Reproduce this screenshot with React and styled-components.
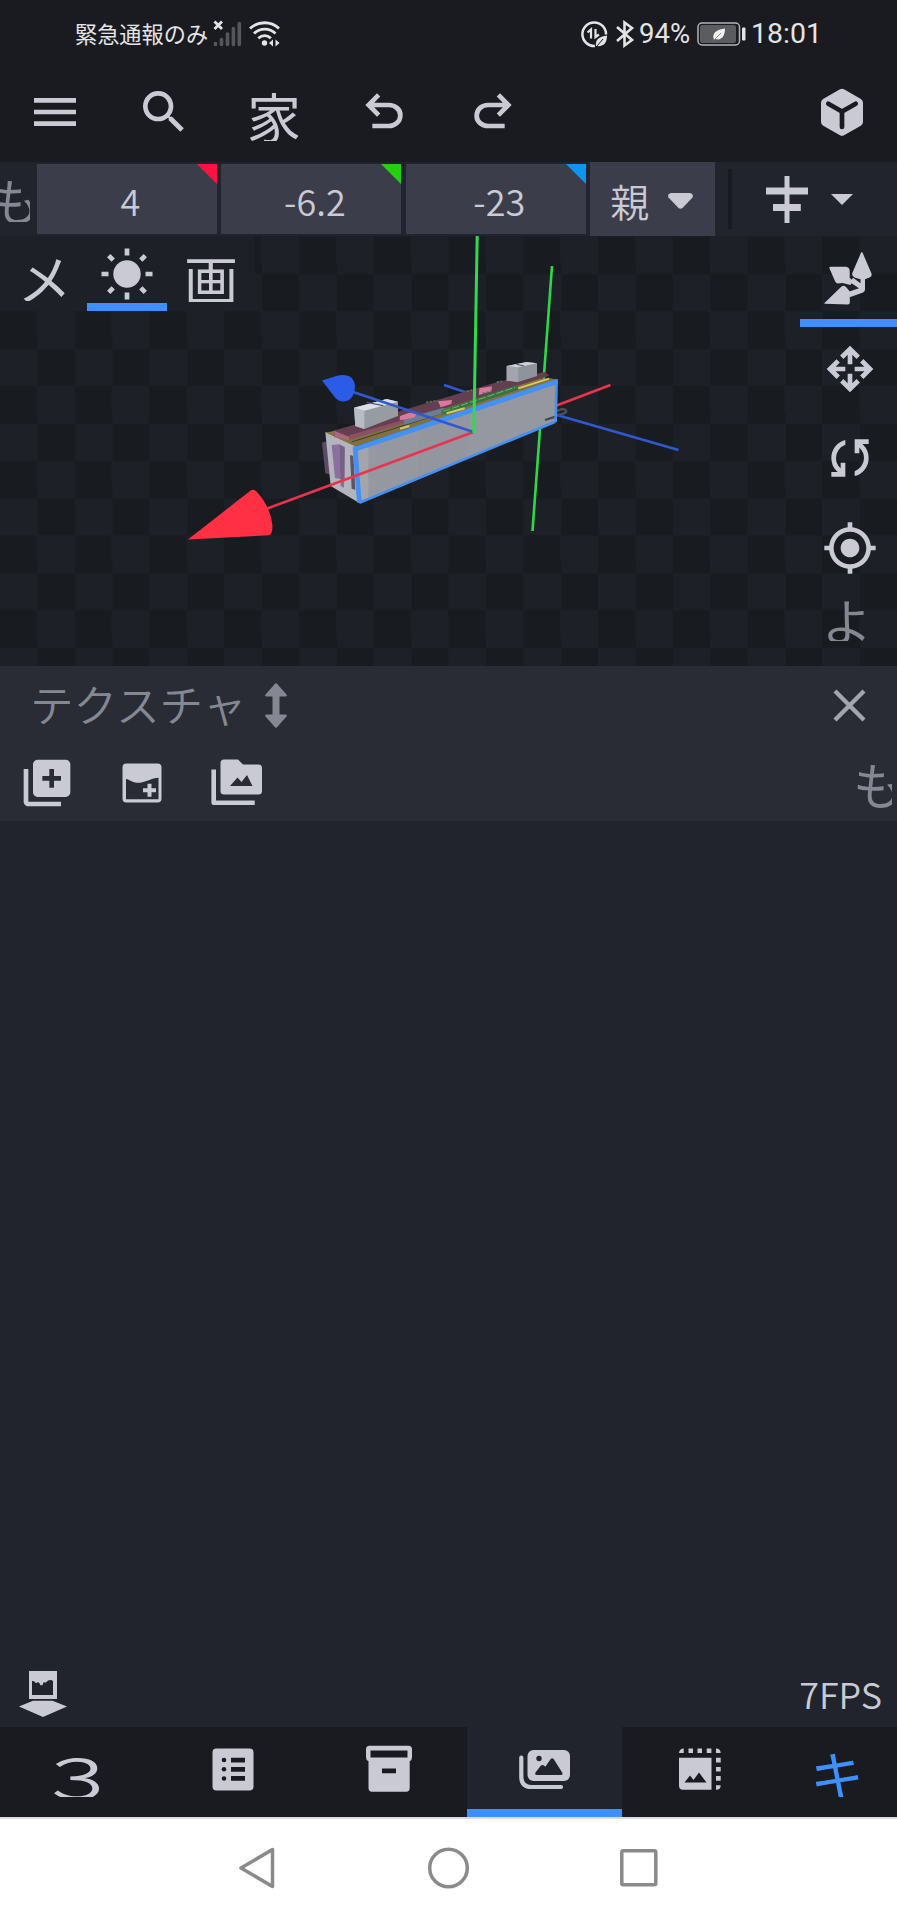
import styled, { createGlobalStyle } from "styled-components";
import { MdSearch, MdMenu, MdGpsFixed } from "react-icons/md";

const GlobalStyle = createGlobalStyle`
  * {
    box-sizing: border-box;
  }

  body {
    margin: 0;
    background: #21242c;
  }
`;

const Screen = styled.div`
  width: 897px;
  height: 1920px;
  display: flex;
  flex-direction: column;
  overflow: hidden;
  background: #21242c;
  color: #cacad4;
  font-family: "Noto Sans CJK JP", sans-serif;

  svg {
    display: block;
    flex: none;
  }
`;

const StatusBar = styled.div`
  height: 68px;
  padding: 0 75px 0 75px;
  display: flex;
  align-items: center;
  background: #1a1b20;
  color: #e4e4e6;
`;

const Carrier = styled.span`
  width: 138px;
  font-size: 22.2px;
  line-height: 30px;
  padding-bottom: 2px;
  white-space: nowrap;
`;

const StatusText = styled.span`
  width: ${(p) => p.$width}px;
  font-family: Roboto, sans-serif;
  font-size: ${(p) => p.$size}px;
  line-height: 30px;
  text-align: ${(p) => p.$align || "left"};
  white-space: nowrap;
`;

const SignalGroup = styled.div`
  display: flex;
  gap: 7px;
`;

const StatusGroup = styled.div`
  margin-left: auto;
  display: flex;
  align-items: center;
`;

const Header = styled.div`
  height: 94px;
  padding-bottom: 6px;
  display: flex;
  align-items: center;
  background: #1a1b20;
`;

const HeaderButton = styled.div`
  width: 109.6px;
  display: flex;
  justify-content: center;
  margin-left: ${(p) => (p.$end ? "auto" : "0")};
`;

const Glyph = styled.span`
  display: block;
  flex: none;
  overflow: hidden;
  width: ${(p) => p.$w}px;
  height: ${(p) => p.$h}px;
  margin: ${(p) => p.$margin || "0"};
  font-size: ${(p) => p.$size}px;
  font-weight: ${(p) => p.$weight || 400};
  line-height: ${(p) => p.$line || p.$h}px;
  text-indent: ${(p) => p.$indent || 0}px;
  white-space: nowrap;
  color: ${(p) => p.$color || "#cacad4"};
  transform: scaleX(${(p) => p.$stretch || 1});
`;

const ValueBar = styled.div`
  height: 74px;
  display: flex;
  align-items: center;
`;

const Value = styled.div`
  position: relative;
  width: 180px;
  height: 70px;
  margin-right: 4.4px;
  padding-left: 7px;
  background: #3b3e4a;
  font-size: 36px;
  font-weight: 350;
  line-height: 73px;
  text-align: center;

  &::after {
    content: "";
    position: absolute;
    top: 0;
    right: 0;
    border-top: 20px solid ${(p) => p.$axis};
    border-left: 20px solid transparent;
  }
`;

const Select = styled.div`
  width: 125px;
  height: 74px;
  padding: 4px 22px 0 20px;
  display: flex;
  align-items: center;
  justify-content: space-between;
  background: #3b3e4a;
`;

const Divider = styled.div`
  width: 4px;
  height: 60px;
  margin: 0 34px 0 13px;
  background: #1a1b20;
`;

const Viewport = styled.div`
  position: relative;
  height: 430px;
  display: flex;
  justify-content: space-between;
  background: repeating-conic-gradient(#1d2027 0 25%, #181b1f 0 50%) 0 0.5px / 74.75px 74.75px;
`;

const Scene = styled.svg`
  position: absolute;
  left: 0;
  top: 0;
`;

const ViewModes = styled.div`
  position: relative;
  height: 75px;
  width: 255px;
  display: flex;
  background: #1d2027;
`;

const Mode = styled.div`
  width: ${(p) => p.$width}px;
  height: 75px;
  display: flex;
  justify-content: center;
  padding-top: ${(p) => p.$top}px;
  border-bottom: 8px solid ${(p) => (p.$active ? "#3e90ff" : "transparent")};
`;

const Tools = styled.div`
  position: relative;
  width: 97px;
  display: flex;
  flex-direction: column;
`;

const Tool = styled.div`
  height: 89.5px;
  padding: 0 0 6px 22px;
  display: flex;
  align-items: center;
`;

const ActiveTool = styled.div`
  height: 91px;
  padding: 16px 0 0 24px;
  border-bottom: 8px solid #3e90ff;
`;

const PanelHeader = styled.div`
  height: 80px;
  padding: 0 31px 2px 30px;
  display: flex;
  align-items: center;
  background: #292c35;
`;

const PanelTitle = styled.span`
  width: 235px;
  padding-bottom: 4px;
  color: #858892;
  font-size: 43.6px;
  font-weight: 350;
  line-height: 72px;
  white-space: nowrap;
`;

const CloseButton = styled.div`
  margin-left: auto;
`;

const PanelTools = styled.div`
  height: 75px;
  padding: 0 5px 0 19px;
  display: flex;
  align-items: center;
  background: #292c35;
`;

const PanelTool = styled.div`
  width: ${(p) => p.$width}px;
  height: 75px;
  padding-top: 9px;
`;

const TextureList = styled.div`
  flex: 1;
  display: flex;
  align-items: flex-end;
  justify-content: space-between;
  padding: 0 15px 8px 18px;
`;

const Fps = styled.span`
  padding-bottom: 4px;
  font-size: 36px;
  font-weight: 350;
  line-height: 44px;
`;

const ModeBar = styled.div`
  height: 90px;
  display: flex;
  background: #1a1b20;
`;

const Tab = styled.div`
  width: ${(p) => p.$width || 155.5}px;
  display: flex;
  justify-content: center;
  padding-top: ${(p) => p.$top || 14}px;
  background: ${(p) => (p.$active ? "#21242c" : "transparent")};
  border-bottom: 8px solid ${(p) => (p.$active ? "#3e90ff" : "transparent")};
`;

const NavBar = styled.div`
  height: 103px;
  padding: 0 0 3px 237px;
  display: flex;
  align-items: center;
  gap: 149px;
  background: #fff;
  border-top: 2px solid #dcdcde;
`;

// 24 unit grid, 56px on screen
const Icon = ({ children, size = 56 }) => (
  <svg width={size} height={size} viewBox="0 0 24 24" fill="currentColor">
    {children}
  </svg>
);

const SymbolIcon = ({ d }) => (
  <svg width="56" height="56" viewBox="0 -960 960 960" fill="currentColor">
    <path d={d} />
  </svg>
);

const UNDO =
  "M280-200v-80h284q63 0 109.5-40T720-420q0-60-46.5-100T564-560H312l104 104-56 56-200-200 200-200 56 56-104 104h252q97 0 169.5 63T800-420q0 94-72.5 157T564-200H280Z";
const REDO =
  "M396-200q-97 0-169.5-63T160-420q0-94 69-157T396-640h252L544-744l56-56 200 200-200 200-56-56 104-104H396q-63 0-109.5 40T240-420q0 60 46.5 100T396-280h284v80H396Z";
const MOVE =
  "M480-80 310-250l57-57 73 73v-166h80v165l72-73 58 58L480-80ZM250-310 80-480l169-169 57 57-72 72h166v80H235l73 72-58 58Zm460 0-57-57 73-73H560v-80h165l-73-72 58-58 170 170-170 170ZM440-560v-166l-73 73-57-57 170-170 170 170-57 57-73-73v166h-80Z";
const ROTATE =
  "M160-160v-80h110l-16-14q-52-46-73-105t-21-119q0-111 66.5-197.5T400-790v84q-72 26-116 88.5T240-478q0 45 17 87.5t53 78.5l10 10v-98h80v240H160Zm400-10v-84q72-26 116-88.5T720-482q0-45-17-87.5T650-648l-10-10v98h-80v-240h240v80H690l16 14q49 49 71.5 106.5T800-482q0 111-66.5 197.5T560-170Z";

const Signal = () => (
  <svg width="29" height="28" viewBox="0 0 29 28">
    <path d="M1.5 1.5l7.500 7.500M9 1.5l-7.500 7.500" stroke="#e4e4e6" strokeWidth="2.8" />
    <path
      d="M2.500 24.500v-1M8.500 19.500v5M14.500 14v10.500M20.400 8.500v16M26.300 3.500v21"
      stroke="#55565b"
      strokeWidth="3.600"
      strokeLinecap="round"
    />
  </svg>
);

const Wifi = () => (
  <svg width="32" height="28" viewBox="0 0 32 28" fill="none" stroke="#e4e4e6" strokeWidth="2.8">
    <path d="M1 8.5C9 .8 22 .8 30 8.5M5 13.500c6-5.800 15.500-5.800 21.500 0M9.300 18.200c4-3.400 8.800-3.400 12.600 0" />
    <circle cx="15.500" cy="23" r="2.700" fill="#e4e4e6" stroke="none" />
    <path d="M24 19.500v7l-4-3.500zM26.500 19.500v7l4-3.500z" fill="#e4e4e6" stroke="none" />
  </svg>
);

const DataSaver = () => (
  <svg width="28" height="28" viewBox="0 0 28 28" fill="none" stroke="#e4e4e6" strokeWidth="2.500">
    <path d="M26 14.500A11.800 11.800 0 1 0 15 26" />
    <path d="M7.500 12.500l3.500-3v9M15.500 9v8l3.500-2.500" strokeWidth="2.200" />
    <path d="M16 26c-1-7 4-9.500 11-10.500 0 7-3 11.500-11 10.500z" fill="#e4e4e6" stroke="none" />
    <path d="M17 26l6-7" stroke="#1a1b20" strokeWidth="1" />
  </svg>
);

const Bluetooth = () => (
  <svg width="31" height="28" viewBox="0 0 31 28" fill="none" stroke="#e4e4e6" strokeWidth="2.600">
    <path d="M9 7l15 13-7.500 5.500V2.500L24 8 9 21" />
  </svg>
);

const Battery = () => (
  <svg width="50" height="26" viewBox="0 0 50 26">
    <rect x="1" y="2" width="41.500" height="22" rx="4" fill="none" stroke="#b4b4b6" strokeWidth="1.500" />
    <rect x="3" y="4" width="36" height="18" rx="2" fill="#5b5c5f" />
    <rect x="45" y="6.500" width="3.500" height="13" rx="1" fill="#e4e4e6" />
    <path d="M17 19c-3-8 4-10.500 11-11.500 0 7-3 12.500-10 10.500l-2 2.500z" fill="#f1f1f1" />
    <path d="M17 19l7-7" stroke="#88898b" strokeWidth="1" />
  </svg>
);

const Cube = () => (
  <svg width="42" height="48" viewBox="0 0 42 48">
    <path
      d="M19 1.200q2-1.100 4 0L39.500 10.700q2.500 1.500 2.500 4V34q0 2.400-2.200 3.700L23 47.300q-2 1.100-4 0L2.200 37.700Q0 36.400 0 34V14.700q0-2.500 2.500-4z"
      fill="#cacad4"
    />
    <path d="M7.300 15.700L21 23.500l13.700-7.800M21 23.500V39" fill="none" stroke="#1a1b20" strokeWidth="4.700" strokeLinecap="round" />
  </svg>
);

const PivotIcon = () => (
  <svg width="50" height="56" viewBox="0 0 50 56" fill="#cacad4">
    <path d="M5.500 16.500q-.8-1.800 1-1.800L22 14.700q3.500.5 3.700 4v7L29 29l-2.500 4-8-2-5 .5q-1.500-.3-2.300-2z" />
    <path d="M37 .8q.8-1.600 1.600 0L47.500 21.500q.7 3-2 4l-4.500 1.800v10.200q0 2-2 3l-13.300 4.800-1-5.500L35 36.300l-9-6 3-4.500 7.500 5.500v-4l-5.500-1.600q-3.500-1.500-2.700-4.700z" />
    <path d="M1 50.500L17 35q3-2.500 5.500.5l3.300 4v11q0 2-2 2L1 51.700q-1.500-.2 0-1.200z" />
  </svg>
);

const Sun = () => (
  <svg width="52" height="52" viewBox="-26 -26 52 52">
    <circle r="13.700" fill="#cacad4" />
    <g stroke="#cacad4" strokeWidth="4.700">
      <path d="M0-25.500v7M0 25.500v-7M-25.500 0h7M25.500 0h-7" />
      <path d="M-18.300-18.300l4.500 4.500M18.300-18.300l-4.500 4.500M-18.300 18.300l4.500-4.500M18.300 18.300l-4.500-4.500" />
    </g>
  </svg>
);

const AlignIcon = () => (
  <svg width="42" height="47" viewBox="0 0 42 47" fill="#cacad4">
    <path d="M18.500 0h5v11.500H42v7H23.500V28h11.300v7H23.500v12h-5V35H7v-7h11.500v-9.500H0v-7h18.500z" />
  </svg>
);

const NewTexture = () => (
  <svg width="56" height="56" viewBox="0 0 56 56">
    <rect x="8.500" y="8.500" width="39" height="39" rx="4" fill="#cacad4" />
    <path d="M12 24c4 .5 6 4 13 3.800 7-.3 13-5 19.500-5v21.500H12z" fill="#292c35" />
    <path d="M29 35.200h13M35.500 28.800v13" stroke="#cacad4" strokeWidth="4" />
  </svg>
);

const LoadFolder = () => (
  <svg width="56" height="56" viewBox="0 0 56 56">
    <path d="M4.700 14.500v33.200h41" fill="none" stroke="#cacad4" strokeWidth="4.600" strokeLinejoin="round" />
    <path d="M11.500 8q0-3.500 3.500-3.500h14l5 5h15.500q3.500 0 3.500 3.500v23q0 3.500-3.500 3.500H15q-3.500 0-3.500-3.500z" fill="#cacad4" />
    <path d="M21 31l7.500-8.500 4 4.500 5.500-7L43.500 31z" fill="#292c35" />
  </svg>
);

const ResizeArrow = () => (
  <svg width="22" height="45" viewBox="0 0 22 45" fill="#858892">
    <path d="M10 .8q1-1 2 0l9.500 10.700q1 2-1 2H14.500v18h6q2 0 1 2L12 44.200q-1 1-2 0L.5 33.500q-1-2 1-2h6v-18h-6q-2 0-1-2z" />
  </svg>
);

const PaintOnto = () => (
  <svg width="50" height="48" viewBox="0 0 50 48" fill="#cacad4">
    <path d="M11 0h28v28H11z" />
    <path d="M14 10l2 .2 2 2 2-1.200 1.500 1.200 1 2h2l1-3 2.500.2 2-1.800q3-1.200 5 .4v14H14z" fill="#21242c" />
    <path d="M1 35.500l14-5.700h19.500L49 35.500 25 46z" />
  </svg>
);

const ListIcon = () => (
  <svg width="56" height="56" viewBox="0 0 56 56">
    <rect x="7.500" y="7.500" width="41" height="42" rx="4" fill="#cacad4" />
    <g fill="#1a1b20">
      <circle cx="19" cy="19" r="2.300" />
      <circle cx="19" cy="28.300" r="2.300" />
      <circle cx="19" cy="37.500" r="2.300" />
      <path d="M26 16.700h14v4.700H26zM26 26h14v4.700H26zM26 35h14v4.700H26z" />
    </g>
  </svg>
);

const ArchiveIcon = () => (
  <svg width="56" height="56" viewBox="0 0 56 56">
    <path
      d="M8.500 4.700h39q3.500 0 3.500 3.500v8q0 3-2.300 4v26.500q0 4-3.500 4H11q-3.500 0-3.500-4V20.200Q5 19.200 5 16.200v-8q0-3.500 3.500-3.500z"
      fill="#cacad4"
    />
    <path d="M9.500 9.500h37v7h-37zM21 27.500h14v4.700H21z" fill="#1a1b20" />
  </svg>
);

const ImagesIcon = () => (
  <svg width="56" height="56" viewBox="0 0 56 56">
    <path d="M5.300 16.500v19q0 10.500 10 10.500H45" fill="none" stroke="#cacad4" strokeWidth="4.200" strokeLinecap="round" />
    <rect x="11.500" y="9" width="42.500" height="31" rx="6" fill="#cacad4" />
    <circle cx="23" cy="17.500" r="2.700" fill="#21242c" />
    <path d="M19.500 31.500l5-6.500q2-2 4 0l.8.800 5.200-7.500q1.700-2 3.300 0l8.500 13.500q.9 2.200-1.400 2.200H20.800q-2.300 0-1.300-2.500z" fill="#21242c" />
  </svg>
);

const ResizeImageIcon = () => (
  <svg width="56" height="56" viewBox="0 0 56 56" fill="#cacad4">
    <path d="M7 16.700h32.500v32H11q-4 0-4-4z" />
    <path d="M12.500 41.500l5.500-7 3.500 4.500 5.500-7.500 7.500 10z" fill="#1a1b20" />
    <path d="M7 12q.5-4.500 4.700-4.500V12zM16.500 7.500H21V12h-4.500zM25.500 7.500H30V12h-4.500zM34.700 7.500h4.700V12h-4.700zM44 7.500q4.500 0 4.700 4.500H44zM44 16.700h4.700v4.700H44zM44 26h4.700v4.500H44zM44 35h4.700v4.700H44zM44 44.200h4.700q0 4.500-4.700 4.500z" />
  </svg>
);

const ModelScene = () => (
  <Scene width="897" height="430" viewBox="0 236 897 430">
    <g fill="none" strokeWidth="2.600">
      <path d="M552 266L532.500 531" stroke="#2fd84a" />
      <path d="M610.500 385L550 408" stroke="#e8344c" />
      <path d="M678.500 450L550 413M444 385l30 10" stroke="#3159cf" />
    </g>
    <path d="M557 411l5-2q5 .5 4 3-3 3-8 2.500" fill="none" stroke="#4b4d53" strokeWidth="2.500" />

    {/* model */}
    <g transform="translate(300 340) scale(.33333)">
      <path d="M66 308l14-4 12 100-16-4z" fill="#5d4a68" />
      <path d="M76 276l90 42 13 172-87-52z" fill="#b3b4bc" />
      <path d="M95 315l24-2 15 8v98l-29-5z" fill="#8b6f9f" />
      <path d="M119 315l15 8-2 120-10-5z" fill="#6c5b78" opacity=".7" />
      <path d="M150 345l10 3 6 102-11-4z" fill="#5f5366" />
      <path d="M92 275l608-162 68 5-603 201-89-42z" fill="#847343" />
      <path d="M102 272l498-148 135-28 13 11-603 190-41-6z" fill="#633f50" />
      <path d="M102 272l45 18v10l-42-8z" fill="#ad6680" />
      <path d="M147 286l170-48 2 12-172 52z" fill="#8b5066" />
      <path d="M140 302l610-188 20 6-605 199z" fill="#80713d" />
      <path d="M155 306l500-159" stroke="#393e3c" strokeWidth="3" />
      <path d="M310 237l118-33 28 8-142 42z" fill="#697d94" />
      <path d="M425 211l226-76 6 12-232 77z" fill="#36753f" />
      <path d="M430 214l215-72" stroke="#68b66a" strokeWidth="3" strokeDasharray="22 6" />
      <path d="M300 228l28-10 25 3-12 12-42 8zM414 184l42-4-2 12-32 10zM538 145l38-6-2 15-37 11z" fill="#d9799c" />
      <path d="M300 266l28-8M440 220l54-15M655 145l92-29" stroke="#d9c95b" strokeWidth="6" />
      <path d="M378 187l35-5M548 160l28-6M500 154l16-4M590 127l16-3" stroke="#55765a" strokeWidth="5" strokeDasharray="7 4" />
      <path d="M162 203l98-26 34 8v43l-101 39-27-9z" fill="#979ca3" />
      <path d="M162 203l31 9v55l-27-9z" fill="#b8bcc4" />
      <path d="M162 203l98-26 34 8-101 27z" fill="#d9e0e9" />
      <path d="M200 187l50 10" stroke="#555b66" strokeWidth="4" />
      <path d="M620 78l60-12 31 4v38l-56 18-35-4z" fill="#8f939b" />
      <path d="M620 78l35 4v44l-35-4z" fill="#a2a5ad" />
      <path d="M620 78l60-12 31 4-56 12z" fill="#cdd2da" />
      <path d="M650 73l22 5" stroke="#484b54" strokeWidth="3" />
      <path d="M165 324l605-202-4 121-588 245z" fill="#9598a0" />
      <path d="M175 326l30-10v158l-25 10z" fill="#a3a5ac" />
      <path d="M360 257l150-50-10 144-145 58z" fill="#92959e" opacity=".6" />
      <path d="M735 240l32-10" stroke="#44474f" strokeWidth="7" />
      <path d="M162 328l608-203" stroke="#4490f3" strokeWidth="15" />
      <path d="M165 322l13 166" stroke="#4490f3" strokeWidth="14" />
      <path d="M178 488l588-243M770 118l-3 128" fill="none" stroke="#4490f3" strokeWidth="8" />
    </g>

    {/* gizmo */}
    <g fill="none" strokeWidth="2.600">
      <path d="M473.500 432L266 509" stroke="#e8344f" />
      <path d="M473.500 432L350 391" stroke="#3159cf" />
      <path d="M477.200 236L473.800 433" stroke="#31d951" strokeWidth="3" />
    </g>
    <path d="M188 539.500L250 491q3-2.500 6 0 15 16 16.500 35 0 8-3.500 9.300z" fill="#ff3044" />
    <path d="M322 380.500L338 375.500q16-2.500 17 11-1 14-11 15-5 .3-9-4z" fill="#2b5ce8" />
  </Scene>
);

const App = () => {
  return (
    <Screen>
      <GlobalStyle />
      <StatusBar>
        <Carrier>緊急通報のみ</Carrier>
        <SignalGroup>
          <Signal />
          <Wifi />
        </SignalGroup>
        <StatusGroup>
          <DataSaver />
          <Bluetooth />
          <StatusText $width={58} $size={27.5}>
            94%
          </StatusText>
          <Battery />
          <StatusText $width={75} $size={28.5} $align="right">
            18:01
          </StatusText>
        </StatusGroup>
      </StatusBar>

      <Header>
        <HeaderButton>
          <MdMenu size={56} />
        </HeaderButton>
        <HeaderButton>
          <MdSearch size={56} />
        </HeaderButton>
        <HeaderButton>
          <Glyph $w={48} $h={48} $size={54} $line={45} $indent={-3} $margin="9px 0 0">
            家
          </Glyph>
        </HeaderButton>
        <HeaderButton>
          <SymbolIcon d={UNDO} />
        </HeaderButton>
        <HeaderButton>
          <SymbolIcon d={REDO} />
        </HeaderButton>
        <HeaderButton $end>
          <Cube />
        </HeaderButton>
      </Header>

      <ValueBar>
        <Glyph $w={30} $h={48} $size={50} $line={50} $indent={-10} $margin="-2px 7px 0 0" $color="#858892">
          も
        </Glyph>
        <Value $axis="#ff1242">4</Value>
        <Value $axis="#25d00e">-6.2</Value>
        <Value $axis="#0d95f2">-23</Value>
        <Select>
          <Glyph $w={40} $h={50} $size={39} $weight={350} $line={48}>
            親
          </Glyph>
          <svg width="25" height="16" viewBox="0 0 25 16" fill="#cacad4">
            <path d="M3 0h19q4 1 2.500 4.500L14.500 15q-2 1.500-4 0L.5 4.500Q-1 1 3 0z" />
          </svg>
        </Select>
        <Divider />
        <AlignIcon />
        <svg width="67" height="11" viewBox="-23 0 67 11" fill="#cacad4">
          <path d="M0 0h22L11 11z" />
        </svg>
      </ValueBar>

      <Viewport>
        <ModelScene />
        <ViewModes>
          <Mode $width={87} $top={17}>
            <Glyph $w={48} $h={48} $size={54} $line={50} $indent={-2}>
              メ
            </Glyph>
          </Mode>
          <Mode $width={80} $top={11.5} $active>
            <Sun />
          </Mode>
          <Mode $width={88} $top={17}>
            <Glyph $w={48} $h={49} $size={54} $line={52} $indent={-3}>
              画
            </Glyph>
          </Mode>
        </ViewModes>
        <Tools>
          <ActiveTool>
            <PivotIcon />
          </ActiveTool>
          <Tool>
            <SymbolIcon d={MOVE} />
          </Tool>
          <Tool>
            <SymbolIcon d={ROTATE} />
          </Tool>
          <Tool>
            <MdGpsFixed size={56} />
          </Tool>
          <Glyph $w={48} $h={47} $size={50} $line={50} $margin="-2px 0 0 22px" $color="#858892">
            よ
          </Glyph>
        </Tools>
      </Viewport>

      <PanelHeader>
        <PanelTitle>テクスチャ</PanelTitle>
        <ResizeArrow />
        <CloseButton>
          <svg width="33" height="33" viewBox="0 0 33 33" fill="none" stroke="#a3a4ae" strokeWidth="4.300">
            <path d="M2 2l29 29M31 2L2 31" />
          </svg>
        </CloseButton>
      </PanelHeader>
      <PanelTools>
        <PanelTool $width={95}>
          <Icon>
            <path d="M4 6H2v14c0 1.100.9 2 2 2h14v-2H4V6z" />
            <path
              fillRule="evenodd"
              d="M20 2H8c-1.100 0-2 .9-2 2v12c0 1.100.9 2 2 2h12c1.100 0 2-.9 2-2V4c0-1.100-.9-2-2-2zm-2 9h-3v3h-2v-3h-3V9h3V6h2v3h3z"
            />
          </Icon>
        </PanelTool>
        <PanelTool $width={95}>
          <NewTexture />
        </PanelTool>
        <PanelTool $width={95}>
          <LoadFolder />
        </PanelTool>
        <Glyph $w={40} $h={48} $size={50} $line={46} $indent={1} $margin="0 0 0 auto" $color="#858892">
          も
        </Glyph>
      </PanelTools>

      <TextureList>
        <PaintOnto />
        <Fps>7FPS</Fps>
      </TextureList>

      <ModeBar>
        <Tab $top={26}>
          <Glyph $w={54} $h={44} $size={54} $line={46} $weight={350} $stretch={1.58}>
            {"\uFF13"}
          </Glyph>
        </Tab>
        <Tab>
          <ListIcon />
        </Tab>
        <Tab>
          <ArchiveIcon />
        </Tab>
        <Tab $active>
          <ImagesIcon />
        </Tab>
        <Tab>
          <ResizeImageIcon />
        </Tab>
        <Tab $width={119} $top={24}>
          <Glyph $w={48} $h={46} $size={54} $line={46} $indent={-3} $color="#3e90ff">
            キ
          </Glyph>
        </Tab>
      </ModeBar>

      <NavBar>
        <svg width="40" height="42" viewBox="0 0 40 42" fill="none" stroke="#8a8a8a" strokeWidth="3.500" strokeLinejoin="round">
          <path d="M4 21L35.500 2.500v37z" />
        </svg>
        <svg width="44" height="44" viewBox="0 0 44 44" fill="none" stroke="#8a8a8a" strokeWidth="3.500">
          <circle cx="22.500" cy="22" r="18.800" />
        </svg>
        <svg width="40" height="40" viewBox="0 0 40 40" fill="none" stroke="#8a8a8a" strokeWidth="3.500">
          <rect x="2.800" y="2.800" width="34" height="34" rx="1.500" />
        </svg>
      </NavBar>
    </Screen>
  );
};

export default App;
